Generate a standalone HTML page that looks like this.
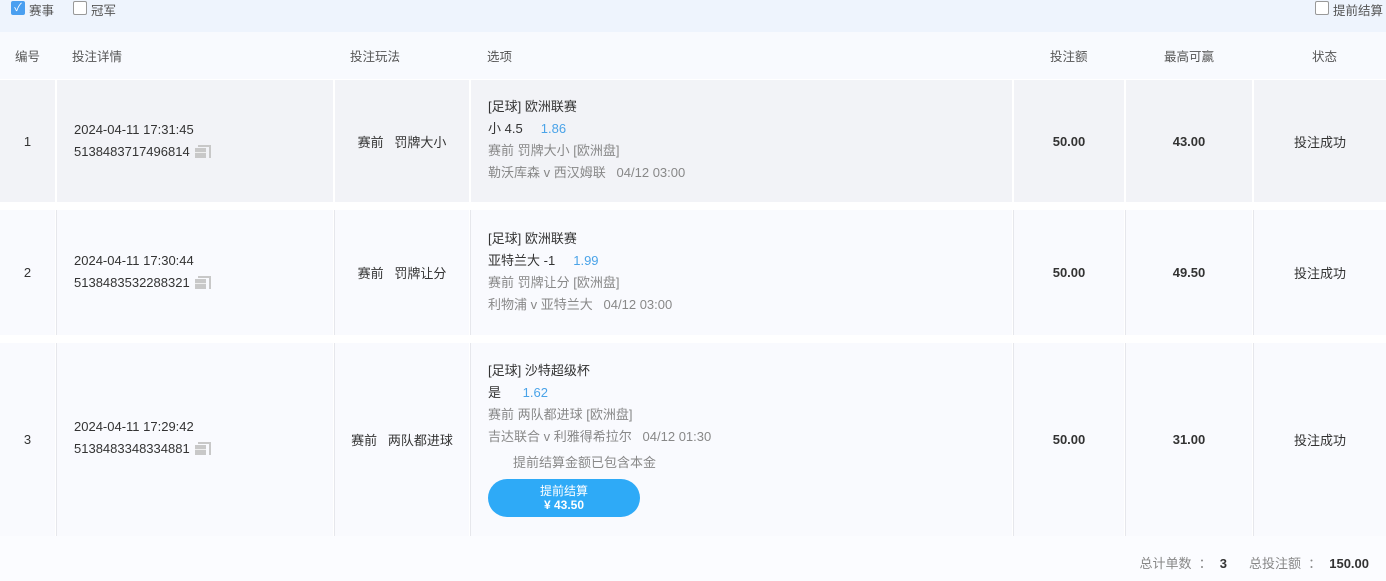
<!DOCTYPE html>
<html><head><meta charset="utf-8"><style>
*{margin:0;padding:0;box-sizing:border-box}
body{width:1386px;height:581px;overflow:hidden;background:#fff;font-family:"Liberation Sans","Noto Sans CJK SC",sans-serif;font-size:13px;color:#333;position:relative}
.a{position:absolute}
.top{left:0;top:0;width:1386px;height:32px;background:#eef4fd}
.hd{left:0;top:32px;width:1386px;height:47px;background:#f8fafe}
.hd span{position:absolute;top:14px;color:#555;font-size:12.5px}
.cb{width:13px;height:13px;border:1px solid #999;border-radius:2px;background:#fff;display:inline-block}
.cell{position:absolute}
.c{display:flex;align-items:center;justify-content:center;text-align:center}
.g{color:#888}
.b{color:#4aa3e8}
.ic{display:inline-block;width:14px;height:13px;position:relative;vertical-align:-2px;margin-left:5px}
.ic:before{content:"";position:absolute;left:3px;top:0;width:11px;height:11px;border:2px solid #c8c8c8;border-left:none;border-bottom:none}
.ic:after{content:"";position:absolute;left:0;top:3px;width:11px;height:10px;background:#c8c8c8;box-shadow:inset 0 4px 0 #c8c8c8,inset 0 5px 0 #eee}
.num{font-weight:bold;color:#333}
.opt div{line-height:22px}
</style></head><body>
<div class="a top"></div>
<div class="a" style="left:11px;top:1px;width:14px;height:14px;background:#4a9ff0;border-radius:2px;color:#fff;font-size:11px;line-height:14px;text-align:center">✓</div>
<div class="a" style="left:29px;top:0;font-size:12.5px;color:#555">赛事</div>
<div class="a cb" style="left:73px;top:1px;width:14px;height:14px"></div>
<div class="a" style="left:91px;top:0;font-size:12.5px;color:#555">冠军</div>
<div class="a cb" style="left:1315px;top:1px;width:14px;height:14px"></div>
<div class="a" style="left:1333px;top:0;font-size:12.5px;color:#555">提前结算</div>

<div class="a hd">
<span style="left:15px">编号</span><span style="left:72px">投注详情</span><span style="left:350px">投注玩法</span><span style="left:487px">选项</span><span style="left:1050px">投注额</span><span style="left:1164px">最高可赢</span><span style="left:1312px">状态</span>
</div>

<!-- row1 -->
<div class="cell c" style="left:0;top:80px;width:55px;height:122px;background:#f2f3f7">1</div>
<div class="cell" style="left:57px;top:80px;width:276px;height:122px;background:#f2f3f7"><div style="position:absolute;left:17px;top:39px;line-height:22px">2024-04-11 17:31:45<br>5138483717496814<span class="ic"></span></div></div>
<div class="cell c" style="left:335px;top:80px;width:134px;height:122px;background:#f2f3f7">赛前&nbsp;&nbsp;&nbsp;罚牌大小</div>
<div class="cell opt" style="left:471px;top:80px;width:541px;height:122px;background:#f2f3f7;padding:16px 0 0 17px">
<div>[足球] 欧洲联赛</div><div>小 4.5&nbsp;&nbsp;&nbsp;&nbsp;&nbsp;<span class="b">1.86</span></div><div class="g">赛前 罚牌大小 [欧洲盘]</div><div class="g">勒沃库森 v 西汉姆联&nbsp;&nbsp;&nbsp;04/12 03:00</div></div>
<div class="cell c num" style="left:1014px;top:80px;width:110px;height:122px;background:#f2f3f7">50.00</div>
<div class="cell c num" style="left:1126px;top:80px;width:126px;height:122px;background:#f2f3f7">43.00</div>
<div class="cell c" style="left:1254px;top:80px;width:132px;height:122px;background:#f2f3f7">投注成功</div>

<!-- row2 -->
<div class="cell c" style="left:0;top:210px;width:55px;height:125px;background:#f9fafe">2</div>
<div class="cell" style="left:56px;top:210px;width:277px;height:125px;background:#f9fafe;border-left:1px solid #e6e7ec"><div style="position:absolute;left:17px;top:40px;line-height:22px">2024-04-11 17:30:44<br>5138483532288321<span class="ic"></span></div></div>
<div class="cell c" style="left:334px;top:210px;width:135px;height:125px;background:#f9fafe;border-left:1px solid #e6e7ec">赛前&nbsp;&nbsp;&nbsp;罚牌让分</div>
<div class="cell opt" style="left:470px;top:210px;width:542px;height:125px;background:#f9fafe;border-left:1px solid #e6e7ec;padding:18px 0 0 17px">
<div>[足球] 欧洲联赛</div><div>亚特兰大 -1&nbsp;&nbsp;&nbsp;&nbsp;&nbsp;<span class="b">1.99</span></div><div class="g">赛前 罚牌让分 [欧洲盘]</div><div class="g">利物浦 v 亚特兰大&nbsp;&nbsp;&nbsp;04/12 03:00</div></div>
<div class="cell c num" style="left:1013px;top:210px;width:111px;height:125px;background:#f9fafe;border-left:1px solid #e6e7ec">50.00</div>
<div class="cell c num" style="left:1125px;top:210px;width:127px;height:125px;background:#f9fafe;border-left:1px solid #e6e7ec">49.50</div>
<div class="cell c" style="left:1253px;top:210px;width:133px;height:125px;background:#f9fafe;border-left:1px solid #e6e7ec">投注成功</div>

<!-- row3 -->
<div class="cell c" style="left:0;top:343px;width:55px;height:193px;background:#f9fafe">3</div>
<div class="cell" style="left:56px;top:343px;width:277px;height:193px;background:#f9fafe;border-left:1px solid #e6e7ec"><div style="position:absolute;left:17px;top:73px;line-height:22px">2024-04-11 17:29:42<br>5138483348334881<span class="ic"></span></div></div>
<div class="cell c" style="left:334px;top:343px;width:135px;height:193px;background:#f9fafe;border-left:1px solid #e6e7ec">赛前&nbsp;&nbsp;&nbsp;两队都进球</div>
<div class="cell opt" style="left:470px;top:343px;width:542px;height:193px;background:#f9fafe;border-left:1px solid #e6e7ec;padding:17px 0 0 17px">
<div>[足球] 沙特超级杯</div><div>是&nbsp;&nbsp;&nbsp;&nbsp;&nbsp;&nbsp;<span class="b">1.62</span></div><div class="g">赛前 两队都进球 [欧洲盘]</div><div class="g">吉达联合 v 利雅得希拉尔&nbsp;&nbsp;&nbsp;04/12 01:30</div>
<div class="g" style="margin:4px 0 0 25px">提前结算金额已包含本金</div>
<div style="margin-top:5px;width:152px;height:38px;border-radius:19px;background:#2eaaf7;color:#fff;text-align:center;font-size:12px;line-height:14px;padding-top:5px">提前结算<br><b>¥ 43.50</b></div></div>
<div class="cell c num" style="left:1013px;top:343px;width:111px;height:193px;background:#f9fafe;border-left:1px solid #e6e7ec">50.00</div>
<div class="cell c num" style="left:1125px;top:343px;width:127px;height:193px;background:#f9fafe;border-left:1px solid #e6e7ec">31.00</div>
<div class="cell c" style="left:1253px;top:343px;width:133px;height:193px;background:#f9fafe;border-left:1px solid #e6e7ec">投注成功</div>

<div class="a" style="left:0;top:536px;width:1386px;height:45px;background:#fbfcff"></div>
<div class="a" style="right:17px;top:553px;color:#888;white-space:nowrap">总计单数&nbsp;&nbsp;：<b style="color:#333;margin-left:8px">3</b><span style="margin-left:22px">总投注额&nbsp;&nbsp;：</span><b style="color:#333;margin-left:8px">150.00</b></div>
</body></html>
